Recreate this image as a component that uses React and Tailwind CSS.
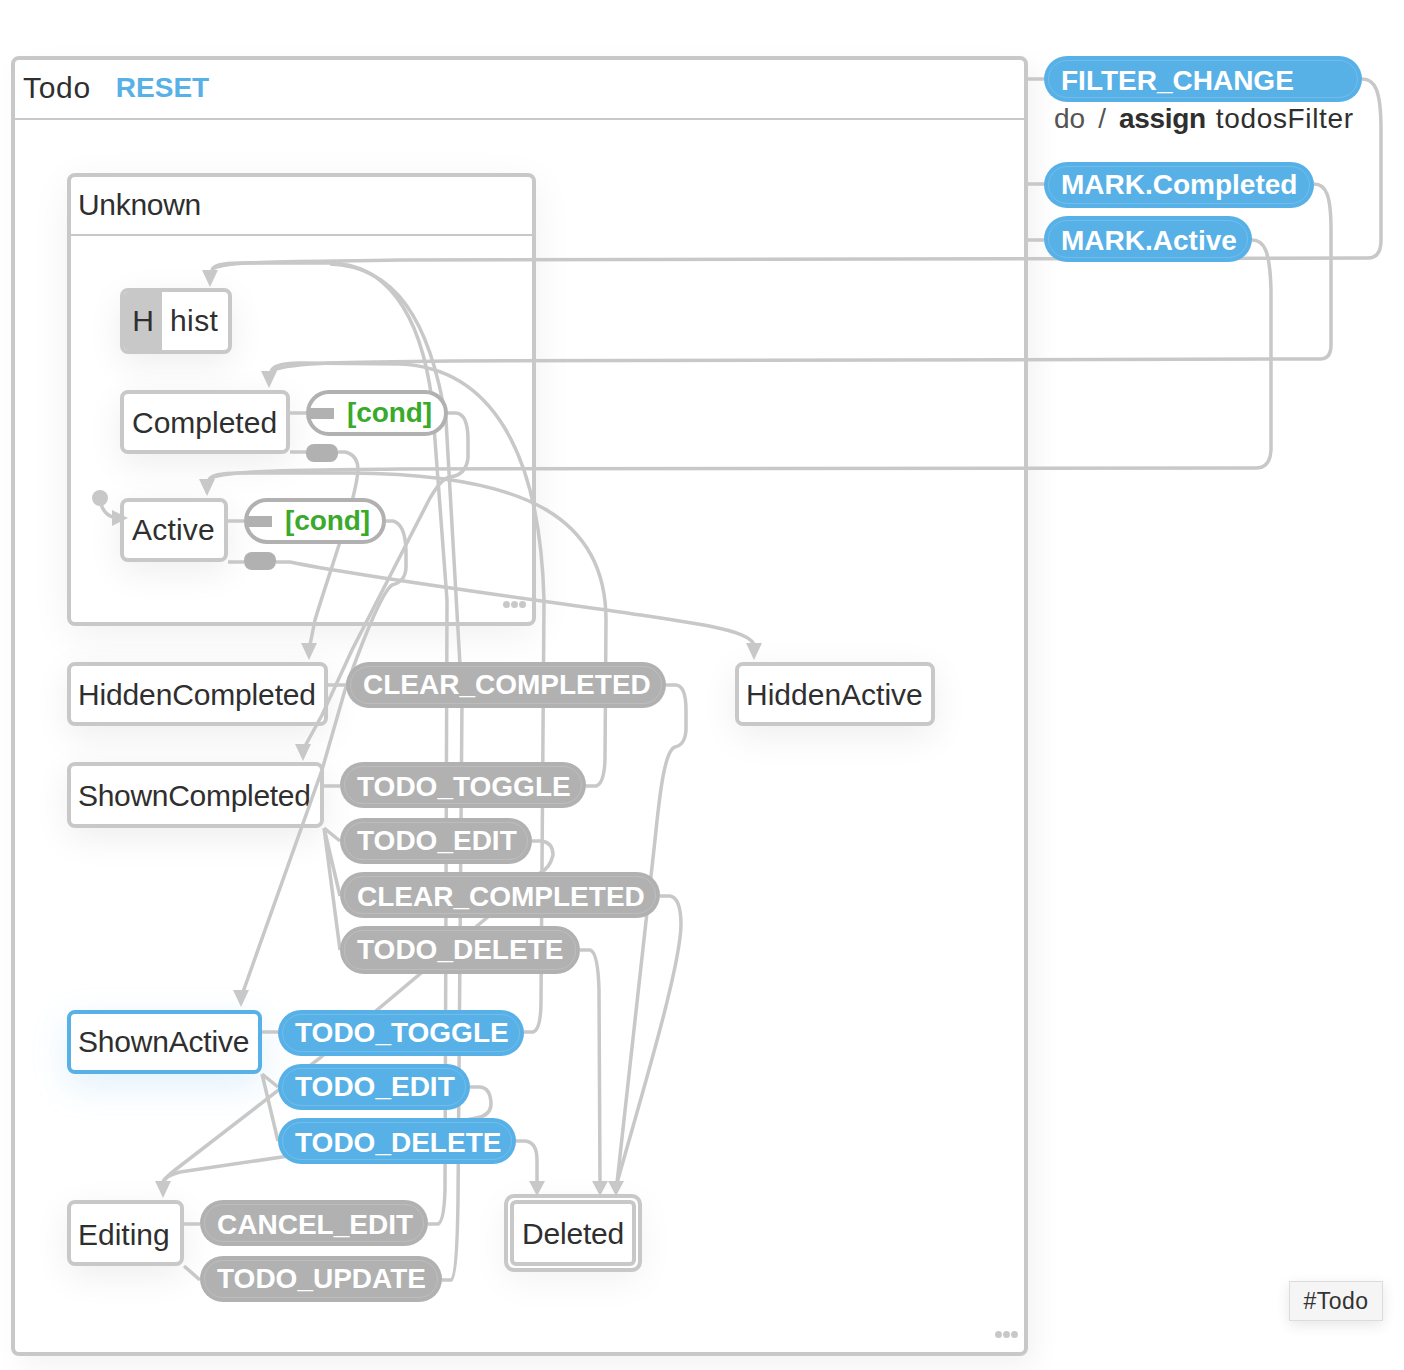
import React from 'react'

const Dots = () => (
  <div className="absolute bottom-[14px] right-[6px] flex gap-[1px]">
    <span className="h-[7px] w-[7px] rounded-full bg-[#c8c8c8]" />
    <span className="h-[7px] w-[7px] rounded-full bg-[#c8c8c8]" />
    <span className="h-[7px] w-[7px] rounded-full bg-[#c8c8c8]" />
  </div>
)

const State = ({ className = '', active, children }) => (
  <div className={`flex shrink-0 items-center rounded-[8px] border-[4px] bg-white pl-[7px] text-[30px] leading-none text-[#2f2f2f] ${active ? 'border-[#57b1e7] shadow-[0_12px_36px_rgba(87,177,231,0.18)]' : 'border-[#c8c8c8] shadow-[0_10px_36px_rgba(0,0,0,0.07)]'} ${className}`}>
    {children}
  </div>
)

// event pill on a transition, sits above the edges
const Event = ({ className = '', blue, children }) => (
  <div className={`relative z-20 flex shrink-0 items-center rounded-[24px] pl-[17px] text-[28px] font-bold leading-none text-white ${blue ? 'bg-[#57b1e7]' : 'bg-[#b1b1b1]'} ${className}`}>
    <span className="pointer-events-none absolute inset-[4px] rounded-[19px] border border-white/15" />
    <span className="relative whitespace-nowrap">{children}</span>
  </div>
)

const Guard = () => (
  <div className="relative z-20 flex h-[46px] w-[142px] items-center rounded-[23px] border-[4px] border-[#b1b1b1] bg-white">
    <span className="h-[11px] w-[24px] bg-[#b1b1b1]" />
    <span className="ml-[13px] text-[28px] font-bold leading-none tracking-[-0.1px] text-[#39aa2b]">[cond]</span>
  </div>
)

const Stub = () => <div className="relative z-20 h-[18px] w-[32px] rounded-[8px] bg-[#b1b1b1]" />

const Edges = () => (
  <svg className="pointer-events-none absolute left-0 top-0 z-10" width="1404" height="1370" fill="none" stroke="#c8c8c8" strokeWidth="3.5">
    {/* top level events */}
    <path d="M1028 79H1044M1028 184H1044M1028 240H1044" />
    <path d="M1362 79C1375 79 1381 90 1381 130L1381 240Q1381 258 1368 258L400 260C300 262 220 260 212 270" />
    <path d="M1314 184C1326 184 1331 195 1331 230L1331 345Q1331 359 1320 359L450 361C350 362 280 362 271 372" />
    <path d="M1252 240C1264 240 1270 250 1271 290L1271 450Q1270 468 1256 468L400 469C300 470 216 470 209 480" />

    {/* into hist */}
    <path d="M428 1224H438Q444 1222 445 1190L447 600L432 400C420 310 385 264 330 263L240 263C225 263 213 265 212 270" />
    <path d="M442 1280H451Q457 1278 458 1200L462 700L446 420C430 320 395 266 330 264" />

    {/* into Completed and Active */}
    <path d="M524 1032H533Q541 1030 541 1000L544 600C540 450 490 368 400 364L300 363C285 363 272 365 271 372" />
    <path d="M586 786H596Q604 784 605 760L606 620C606 520 530 474 350 473L240 473C222 473 210 475 209 480" />

    {/* guards and stubs inside Unknown */}
    <path d="M290 413H306M290 452H306M228 521H244M228 562H244" />
    <path d="M447 413H456Q468 414 468 440L468 458Q466 475 450 477C442 478 435 490 430 498L352 650L322 715L304 748" />
    <path d="M386 521H393Q405 524 406 550L406 568Q405 582 392 585C385 590 370 620 345 690L322 770L243 992" />
    <path d="M338 452H345Q358 455 358 470C356 500 330 570 315 620L310 645" />
    <path d="M276 562H290C350 575 500 595 620 612C700 624 750 630 754 645" />

    {/* Hidden / Shown completed */}
    <path d="M328 685H346M324 786H340M324 828L340 841M324 828L340 896M324 828L340 950" />
    <path d="M666 685H676Q686 686 686 710L686 730Q685 745 675 747C665 750 660 790 655 840L617 1183" />
    <path d="M532 841H542Q553 843 553 855Q550 868 540 873L320 1058L175 1170Q165 1178 163 1182" />
    <path d="M660 896H670Q681 898 681 925C680 970 640 1100 617 1183" />
    <path d="M580 950H590Q598 952 599 990L600 1183" />

    {/* ShownActive */}
    <path d="M262 1032H278M262 1074L278 1087M262 1074L278 1141" />
    <path d="M470 1087H480Q491 1088 491 1105Q490 1116 476 1118L282 1157L180 1172Q165 1176 163 1182" />
    <path d="M516 1141H525Q537 1142 537 1160L537 1183" />

    {/* Editing */}
    <path d="M184 1224H200M184 1266L200 1280" />

    {/* initial transition */}
    <path d="M100 498C101 510 106 516 116 518" />

    <circle cx="100" cy="498" r="8" fill="#c8c8c8" stroke="none" />
    <g fill="#c8c8c8" stroke="none">
      <polygon points="210,287 202,270 218,270" />
      <polygon points="269,388 261,371 277,371" />
      <polygon points="207,496 199,479 215,479" />
      <polygon points="128,518 112,510 112,526" />
      <polygon points="309,660 301,643 317,643" />
      <polygon points="754,660 746,643 762,643" />
      <polygon points="303,761 295,744 311,744" />
      <polygon points="241,1007 233,990 249,990" />
      <polygon points="163,1198 155,1181 171,1181" />
      <polygon points="537,1196 529,1181 545,1181" />
      <polygon points="600,1196 592,1181 608,1181" />
      <polygon points="616,1196 608,1181 624,1181" />
    </g>
  </svg>
)

export default function App() {
  return (
    <div className="relative flex h-[1370px] w-[1404px] items-start overflow-hidden bg-white pl-[11px] pt-[56px] font-['Liberation_Sans',Arial,sans-serif]">
      {/* Todo */}
      <div className="relative h-[1300px] w-[1017px] shrink-0 rounded-[8px] border-[4px] border-[#c8c8c8] bg-white shadow-[8px_10px_28px_rgba(0,0,0,0.05)]">
        <div className="flex h-[60px] items-center gap-[25px] border-b-2 border-[#c8c8c8] pb-[2px] pl-[8px] text-[30px] leading-none text-[#2f2f2f]">
          <span className="tracking-[0.7px]">Todo</span>
          <span className="text-[28px] font-bold text-[#57b1e7]">RESET</span>
        </div>

        <div className="flex flex-col items-start pl-[52px] pt-[53px]">
          {/* Unknown */}
          <div className="relative h-[453px] w-[469px] rounded-[8px] border-[4px] border-[#c8c8c8] bg-white shadow-[0_10px_40px_rgba(0,0,0,0.06)]">
            <div className="flex h-[59px] items-center border-b-2 border-[#c8c8c8] pb-[2px] pl-[7px] text-[30px] leading-none tracking-[-0.3px] text-[#2f2f2f]">
              Unknown
            </div>
            <div className="flex flex-col items-start gap-[36px] pl-[49px] pt-[52px]">
              <div className="flex h-[66px] w-[112px] overflow-hidden rounded-[8px] border-[4px] border-[#c8c8c8] bg-white text-[30px] leading-none text-[#2f2f2f] shadow-[0_10px_36px_rgba(0,0,0,0.07)]">
                <span className="flex w-[38px] items-center justify-end bg-[#c8c8c8] pr-[8px]">H</span>
                <span className="flex items-center pl-[8px] tracking-[0.4px]">hist</span>
              </div>
              <div className="flex items-start gap-[16px]">
                <State className="h-[64px] w-[170px] pl-[8px] pt-[2px]">Completed</State>
                <div className="flex flex-col items-start gap-[8px]">
                  <Guard />
                  <Stub />
                </div>
              </div>
              <div className="flex items-start gap-[16px]">
                <State className="h-[64px] w-[108px] pl-[8px] tracking-[0.2px]">Active</State>
                <div className="flex flex-col items-start gap-[8px]">
                  <Guard />
                  <Stub />
                </div>
              </div>
            </div>
            <Dots />
          </div>

          <div className="mt-[36px] flex items-start">
            <State className="h-[64px] w-[261px] pt-[2px] tracking-[-0.15px]">HiddenCompleted</State>
            <Event className="ml-[18px] h-[46px] w-[320px]">CLEAR_COMPLETED</Event>
            <State className="ml-[69px] h-[64px] w-[200px] pt-[2px]">HiddenActive</State>
          </div>

          <div className="mt-[36px] flex items-start gap-[16px]">
            <State className="h-[66px] w-[257px] pt-[2px] tracking-[-0.3px]">ShownCompleted</State>
            <div className="flex flex-col items-start">
              <Event className="h-[46px] w-[246px] pt-[4px]">TODO_TOGGLE</Event>
              <Event className="mt-[10px] h-[46px] w-[192px]">TODO_EDIT</Event>
              <Event className="mt-[8px] h-[46px] w-[320px] pt-[4px]">CLEAR_COMPLETED</Event>
              <Event className="mt-[8px] h-[48px] w-[240px]">TODO_DELETE</Event>
            </div>
          </div>

          <div className="mt-[36px] flex items-start gap-[16px]">
            <State active className="h-[64px] w-[195px] tracking-[-0.2px]">ShownActive</State>
            <div className="flex flex-col items-start gap-[8px]">
              <Event blue className="h-[46px] w-[246px]">TODO_TOGGLE</Event>
              <Event blue className="h-[46px] w-[192px]">TODO_EDIT</Event>
              <Event blue className="h-[46px] w-[238px] pt-[4px]">TODO_DELETE</Event>
            </div>
          </div>

          <div className="mt-[36px] flex items-start">
            <State className="h-[66px] w-[117px] pt-[4px]">Editing</State>
            <div className="ml-[16px] flex flex-col items-start gap-[10px]">
              <Event className="h-[46px] w-[228px] pt-[4px]">CANCEL_EDIT</Event>
              <Event className="h-[46px] w-[242px]">TODO_UPDATE</Event>
            </div>
            {/* final state */}
            <div className="-mt-[6px] ml-[62px] h-[78px] w-[138px] rounded-[10px] border-[4px] border-[#c8c8c8] bg-white p-[2px] shadow-[0_10px_36px_rgba(0,0,0,0.05)]">
              <div className="flex h-full items-center rounded-[6px] border-[4px] border-[#c8c8c8] pl-[8px] pt-[2px] text-[30px] leading-none tracking-[-0.2px] text-[#2f2f2f]">
                Deleted
              </div>
            </div>
          </div>
        </div>
        <Dots />
      </div>

      {/* events on Todo itself */}
      <div className="ml-[16px] flex flex-col items-start">
        <Event blue className="h-[46px] w-[318px] pt-[4px]">FILTER_CHANGE</Event>
        <div className="ml-[10px] h-[34px] whitespace-nowrap text-[28px] leading-[34px] text-[#2f2f2f]">
          <span className="text-[#555]">do</span>
          <span className="mx-[13px] text-[#555]">/</span>
          <span className="font-bold tracking-[-0.3px]">assign</span>
          <span className="ml-[10px] tracking-[0.65px]">todosFilter</span>
        </div>
        <Event blue className="mt-[26px] h-[46px] w-[270px]">MARK.Completed</Event>
        <Event blue className="mt-[8px] h-[46px] w-[208px] pt-[4px]">MARK.Active</Event>
      </div>

      <Edges />

      {/* statechart id tooltip */}
      <div className="absolute left-[1289px] top-[1281px] z-20 flex h-[40px] w-[94px] items-center justify-center border border-[#dcdcdc] bg-[#f5f5f5] text-[23px] leading-none tracking-[0.5px] text-[#333] shadow-[0_4px_14px_rgba(0,0,0,0.1)]">
        #Todo
      </div>
    </div>
  )
}
